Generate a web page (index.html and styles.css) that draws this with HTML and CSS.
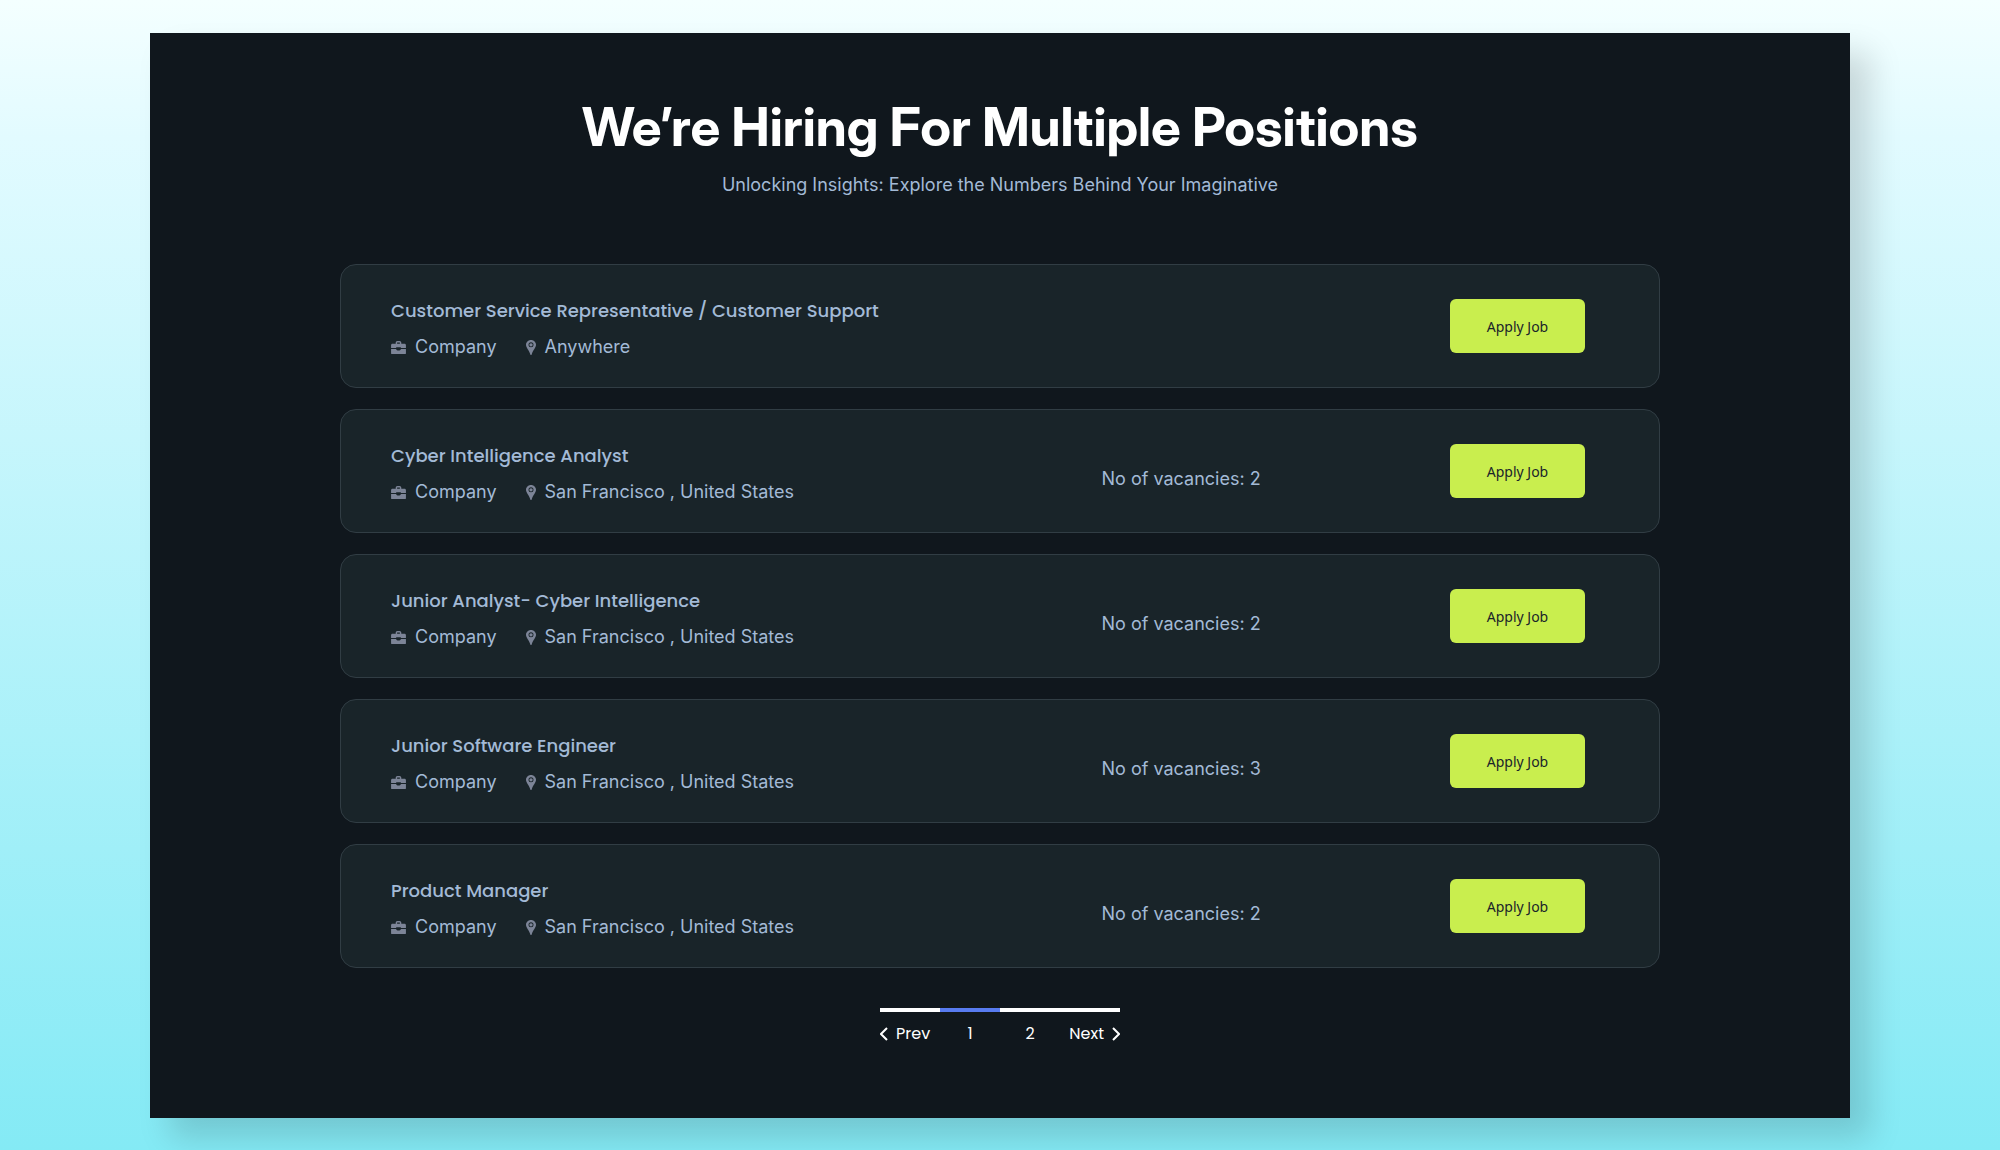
FILE: index.html
```html
<!DOCTYPE html>
<html lang="en">
<head>
    <meta charset="UTF-8">
    <meta name="viewport" content="width=device-width, initial-scale=1.0">
    <title>Careers</title>
    <link rel="stylesheet" href="styles.css">
</head>
<body>
    <svg width="0" height="0" class="sprite" aria-hidden="true">
        <symbol id="briefcase" viewBox="0 0 16 14">
            <path d="M5 3V1.8C5 .8 5.8 0 6.800 0h2.400C10.200 0 11 .8 11 1.800V3h3.500c.8 0 1.500.7 1.500 1.500V7.500h-5.500v-.8h-5v.8H0v-3C0 3.700.7 3 1.500 3zm1.500 0h3V1.600h-3zM0 8.700h5.500c0 1 .7 1.500 1.500 1.500h2c.8 0 1.500-.5 1.500-1.500H16V13.500c0 .3-.2.500-.5.500H.5c-.3 0-.5-.2-.5-.5z"/>
        </symbol>
        <symbol id="pin" viewBox="0 0 12 18">
            <path fill-rule="evenodd" d="M6 0C2.600 0 0 2.600 0 5.800 0 9 3.400 12 5.200 17.300c.3.900 1.300.9 1.600 0C8.600 12 12 9 12 5.800 12 2.600 9.400 0 6 0zm0 2.800a3 3 0 1 1 0 6 3 3 0 0 1 0-6z"/>
            <circle cx="6" cy="5.800" r="2"/>
        </symbol>
    </svg>
    <main class="panel">
        <div class="container">
            <h1>We’re Hiring For Multiple Positions</h1>
            <p class="subtitle">Unlocking Insights: Explore the Numbers Behind Your Imaginative</p>

            <div class="jobs">
                <article class="job">
                    <div class="job-info">
                        <h2>Customer Service Representative / Customer Support</h2>
                        <ul class="meta">
                            <li><svg class="icon"><use href="#briefcase"/></svg>Company</li>
                            <li><svg class="icon pin"><use href="#pin"/></svg>Anywhere</li>
                        </ul>
                    </div>
                    <button type="button" class="apply">Apply Job</button>
                </article>
                <article class="job">
                    <div class="job-info">
                        <h2>Cyber Intelligence Analyst</h2>
                        <ul class="meta">
                            <li><svg class="icon"><use href="#briefcase"/></svg>Company</li>
                            <li><svg class="icon pin"><use href="#pin"/></svg>San Francisco , United States</li>
                        </ul>
                    </div>
                    <p class="vacancies">No of vacancies: 2</p>
                    <button type="button" class="apply">Apply Job</button>
                </article>
                <article class="job">
                    <div class="job-info">
                        <h2>Junior Analyst- Cyber Intelligence</h2>
                        <ul class="meta">
                            <li><svg class="icon"><use href="#briefcase"/></svg>Company</li>
                            <li><svg class="icon pin"><use href="#pin"/></svg>San Francisco , United States</li>
                        </ul>
                    </div>
                    <p class="vacancies">No of vacancies: 2</p>
                    <button type="button" class="apply">Apply Job</button>
                </article>
                <article class="job">
                    <div class="job-info">
                        <h2>Junior Software Engineer</h2>
                        <ul class="meta">
                            <li><svg class="icon"><use href="#briefcase"/></svg>Company</li>
                            <li><svg class="icon pin"><use href="#pin"/></svg>San Francisco , United States</li>
                        </ul>
                    </div>
                    <p class="vacancies">No of vacancies: 3</p>
                    <button type="button" class="apply">Apply Job</button>
                </article>
                <article class="job">
                    <div class="job-info">
                        <h2>Product Manager</h2>
                        <ul class="meta">
                            <li><svg class="icon"><use href="#briefcase"/></svg>Company</li>
                            <li><svg class="icon pin"><use href="#pin"/></svg>San Francisco , United States</li>
                        </ul>
                    </div>
                    <p class="vacancies">No of vacancies: 2</p>
                    <button type="button" class="apply">Apply Job</button>
                </article>
            </div>

            <nav class="pagination" aria-label="Pagination">
                <a href="#" class="prev"><svg class="chevron" viewBox="0 0 8 14"><path d="M7 1L1 7l6 6"/></svg>Prev</a>
                <a href="#" class="active" aria-current="page">1</a>
                <a href="#">2</a>
                <a href="#" class="next">Next<svg class="chevron" viewBox="0 0 8 14"><path d="M1 1l6 6-6 6"/></svg></a>
            </nav>
        </div>
    </main>
</body>
</html>
```
FILE: styles.css
```css
* {
    box-sizing: border-box;
}
body {
    margin: 0;
    min-height: 100vh;
    padding: 33px 0 32px;
    font-family: Inter, sans-serif;
    font-size: 18px;
    line-height: 28px;
    color: #a3bad6;
    background: linear-gradient(#f4ffff, #e2fbff 12%, #84eaf5);
}
.sprite {
    position: absolute;
}
.panel {
    width: 85%;
    margin: 0 auto;
    padding: 60px 40px 70px;
    background: #10171d;
    box-shadow: 20px 20px 30px rgba(0, 0, 0, 0.15);
}
.container {
    max-width: 1320px;
    margin: 0 auto;
}
h1 {
    margin: 0;
    font-family: "Inter Display", "Inter Tight", Inter, sans-serif;
    font-size: 53px;
    font-weight: 700;
    line-height: 68px;
    text-align: center;
    color: #fff;
}
.subtitle {
    margin: 10px 0 65px;
    text-align: center;
}
.jobs {
    display: grid;
    gap: 21px;
}
.job {
    display: grid;
    grid-template-columns: 7fr 3fr 2fr;
    align-items: center;
    padding: 32px 50px 26px;
    background: #192429;
    border: 1px solid #313d44;
    border-radius: 16px;
}
h2 {
    margin: 0 0 8px;
    font-family: Poppins, Inter, sans-serif;
    font-size: 18px;
    font-weight: 500;
    line-height: 28px;
}
.meta {
    display: flex;
    gap: 29px;
    margin: 0;
    padding: 0;
    list-style: none;
}
.meta li {
    display: flex;
    align-items: center;
}
.icon {
    width: 15px;
    height: 13px;
    margin-right: 9px;
    fill: #7c8497;
}
.icon.pin {
    width: 10px;
    height: 15px;
}
.vacancies {
    margin: 10px 0 0;
}
.apply {
    grid-column: 3;
    justify-self: end;
    width: 135px;
    height: 54px;
    margin: 0 24px 6px 0;
    border: none;
    border-radius: 6px;
    background: #c9ee4e;
    color: #1a242a;
    font-family: "Noto Sans", sans-serif;
    font-size: 14px;
    cursor: pointer;
}
.apply:hover {
    background: #b9de3e;
}
.pagination {
    display: grid;
    grid-template-columns: repeat(4, 60px);
    justify-content: center;
    margin-top: 40px;
}
.pagination a {
    display: flex;
    align-items: center;
    justify-content: center;
    gap: 8px;
    padding-top: 8px;
    border-top: 4px solid #fff;
    color: #fff;
    font-family: Poppins, Inter, sans-serif;
    font-size: 16px;
    text-decoration: none;
}
.pagination .active {
    border-color: #587bf0;
}
.pagination .prev {
    justify-content: flex-start;
}
.pagination .next {
    justify-content: flex-end;
}
.chevron {
    width: 8px;
    height: 14px;
    fill: none;
    stroke: #fff;
    stroke-width: 2;
}
```
